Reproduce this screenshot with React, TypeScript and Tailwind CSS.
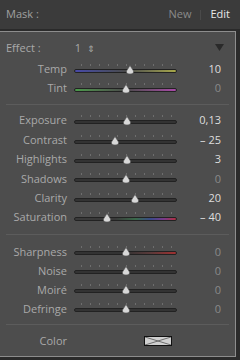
import React from 'react'

type Row = { label: string; value: string; pos: number; bright?: boolean; track?: string }

const font = { fontFamily: '"Open Sans", "DejaVu Sans", sans-serif' }

function Slider({ pos, track }: { pos: number; track?: string }) {
  const ticks = [7, 16, 25, 34, 43, 52, 61, 70, 79, 88, 97]
  return (
    <div className="relative w-[103px] h-[19px]">
      {ticks.map(t => (
        <div key={t} className="absolute top-[4px] w-px h-[2px] bg-[#6e6e6e]" style={{ left: t }} />
      ))}
      <div className={`absolute left-0 right-0 top-[9px] h-[4px] rounded-full border border-[#222] ${track ?? 'bg-[#333]'}`} />
      <svg className="absolute top-[5px]" style={{ left: pos - 5 }} width="10" height="10" viewBox="0 0 10 10">
        <path d="M5 0.5 L8.5 6 Q9 9 5 9 Q1 9 1.5 6 Z" fill="#d8d8d8" stroke="#555" strokeWidth="0.6" />
      </svg>
    </div>
  )
}

function SliderRow({ label, value, pos, bright, track, tall }: Row & { tall?: boolean }) {
  return (
    <div className={`flex items-center ${tall ? 'h-[19.4px]' : 'h-[19px]'}`}>
      <div className="w-[67px] text-right text-[11px] text-[#a9a9a9]">{label}</div>
      <div className="ml-[7px]"><Slider pos={pos} track={track} /></div>
      <div className={`w-[44px] text-right text-[11px] ${bright ? 'text-[#dedede]' : 'text-[#8a8a8a]'}`}>{value}</div>
    </div>
  )
}

export default function App() {
  const group1: Row[] = [
    { label: 'Temp', value: '10', pos: 56, bright: true, track: 'bg-gradient-to-r from-[#4848a8] via-[#4a4a4a] to-[#a8a848]' },
    { label: 'Tint', value: '0', pos: 52, track: 'bg-gradient-to-r from-[#4a9a4a] via-[#4a4a4a] to-[#a848a8]' },
  ]
  const group2: Row[] = [
    { label: 'Exposure', value: '0,13', pos: 53, bright: true },
    { label: 'Contrast', value: '– 25', pos: 41, bright: true },
    { label: 'Highlights', value: '3', pos: 53, bright: true },
    { label: 'Shadows', value: '0', pos: 52 },
    { label: 'Clarity', value: '20', pos: 61, bright: true },
    { label: 'Saturation', value: '– 40', pos: 33, bright: true, track: 'bg-[linear-gradient(to_right,#3a3a3a_0%,#3a3a3a_40%,#3a6a4a_60%,#3a4a8a_75%,#7a3a8a_88%,#b03040_100%)]' },
  ]
  const group3: Row[] = [
    { label: 'Sharpness', value: '0', pos: 52, track: 'bg-[linear-gradient(to_right,#333_0%,#333_50%,#5a3a3a_75%,#a03030_100%)]' },
    { label: 'Noise', value: '0', pos: 52 },
    { label: 'Moiré', value: '0', pos: 52 },
    { label: 'Defringe', value: '0', pos: 52 },
  ]

  return (
    <div className="w-[240px] h-[360px] bg-[#2b2b2b] overflow-hidden" style={font}>
      {/* header */}
      <div className="h-[30px] bg-[#3b3b3b] border-b border-[#2a2a2a] flex items-center px-[6px] text-[11px]">
        <span className="text-[#a0a0a0]">Mask :</span>
        <span className="ml-auto text-[#8a8a8a]">New</span>
        <span className="mx-[9px] w-px h-[10px] bg-[#4a4a4a]" />
        <span className="text-[#e8e8e8] mr-[4px]">Edit</span>
      </div>

      <div className="mt-px w-[236px] h-[326px] bg-[#4d4d4d] border border-[#8d8d8d] border-l-0">
        <div className="flex items-center h-[28px] pt-[5px] pl-[6px] text-[11px]">
          <span className="text-[#a9a9a9]">Effect :</span>
          <span className="ml-[34px] text-[#a9a9a9]">1</span>
          <span className="ml-[6px] text-[9px] text-[#a9a9a9] leading-none">⇕</span>
          <svg className="ml-auto mr-[11px] -mt-[3px]" width="9" height="9" viewBox="0 0 9 9">
            <path d="M0 1 L9 1 L4.5 8 Z" fill="#2a2a2a" />
          </svg>
        </div>

        {group1.map(r => <SliderRow key={r.label} {...r} />)}
        <div className="mx-[6px] my-[6px] h-px bg-[#5c5c5c]" />
        {group2.map(r => <SliderRow key={r.label} tall {...r} />)}
        <div className="mx-[6px] my-[7px] h-px bg-[#5c5c5c]" />
        {group3.map(r => <SliderRow key={r.label} {...r} />)}
        <div className="mx-[6px] my-[6px] h-px bg-[#5c5c5c]" />
        <div className="flex items-center h-[20px]">
          <div className="w-[67px] text-right text-[11px] text-[#a9a9a9]">Color</div>
          <div className="ml-[77px] w-[28px] h-[10px] border border-[#111] bg-[#d0d0d0] relative">
            <svg className="absolute inset-0" width="26" height="8" viewBox="0 0 26 8">
              <path d="M0 0 L26 8 M26 0 L0 8" stroke="#555" strokeWidth="0.8" />
            </svg>
          </div>
        </div>
      </div>
    </div>
  )
}
